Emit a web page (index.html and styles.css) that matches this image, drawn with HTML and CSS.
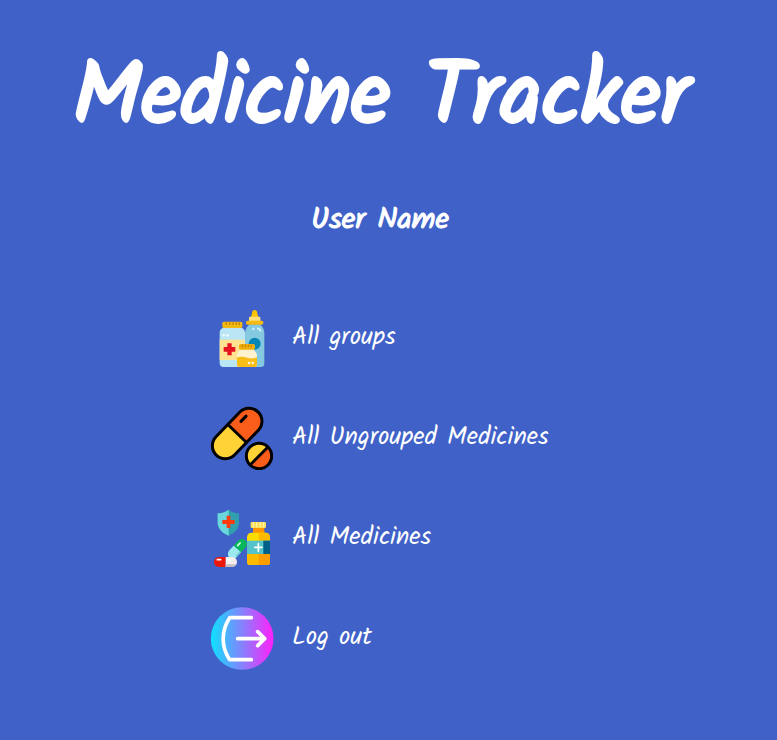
FILE: index.html
```html
<!DOCTYPE html>
<html lang="en">
<head>
<meta charset="utf-8">
<title>Medicine Tracker</title>
<link rel="stylesheet" href="styles.css">
</head>
<body>
<header class="header">
  <h1 class="title">Medicine Tracker</h1>
  <h2 class="user">User Name</h2>
</header>
<nav class="menu">
  <a class="item">
    <svg class="icon" viewBox="24 18 192 192">
      <rect x="73" y="77" width="38" height="14" fill="#8fcbe6"/>
      <path d="M68 83h46c9 0 15 6 15 16v91c0 7-4 11-11 11H64c-7 0-11-4-11-11V99c0-10 6-16 15-16z" fill="#b9e5f5"/>
      <path d="M53 119h76v61H53z" fill="#ffe391"/>
      <rect x="61" y="65" width="60" height="19" rx="5" fill="#f5b914"/>
      <path d="M73 67v8M83 67v8M93 67v8M103 67v8M112 67v8" stroke="#c78500" stroke-width="4"/>
      <path d="M76 130h13v11h11v14H89v11H76v-11H65v-14h11z" fill="#e61420"/>
      <circle cx="65" cy="106" r="4" fill="#eefbff"/><circle cx="77" cy="106" r="4" fill="#eefbff"/>
      <path d="M145 73h27c10 5 15 16 15 27v91c0 6-5 10-10 10h-38c-6 0-10-4-10-10v-91c0-11 6-22 16-27z" fill="#85c9e1"/>
      <path d="M146 53q3-6 4-13c0-13 16-13 16 0q1 7 4 13z" fill="#ffc400"/>
      <rect x="141" y="50" width="34" height="17" rx="3" fill="#ffe07b"/>
      <rect x="132" y="62" width="52" height="12" rx="5" fill="#f5b914"/>
      <circle cx="158" cy="131" r="18" fill="#0787b6"/>
      <circle cx="154" cy="87" r="4" fill="#c8f0ff"/><path d="M165 85c7 0 10 4 11 10" fill="none" stroke="#d7f5ff" stroke-width="5"/>
      <path d="M115 147h40c2 7 10 10 10 20v27c0 4-3 7-8 7h-44c-5 0-8-3-8-7v-27c0-10 8-13 10-20z" fill="#fff2cf"/>
      <path d="M105 172q15-4 30 1t30-1v22c0 4-3 7-8 7h-44c-5 0-8-3-8-7z" fill="#f8bd17"/>
      <rect x="111" y="132" width="48" height="17" rx="5" fill="#f1af0b"/>
      <path d="M121 134v8M130 134v8M139 134v8M148 134v8" stroke="#bd7d00" stroke-width="3"/>
      <circle cx="141" cy="189" r="4" fill="#fff8db"/><circle cx="152" cy="189" r="4" fill="#fff8db"/>
    </svg>
    <span>All groups</span>
  </a>
  <a class="item">
    <svg class="icon" viewBox="24 18 192 192">
      <g transform="translate(105.500 100.500) rotate(-46)" stroke="#000" stroke-width="9">
        <path d="M0-39h-51a39 39 0 0 0 0 78H0z" fill="#ffd336" stroke="none"/>
        <path d="M0-39h51a39 39 0 0 1 0 78H0z" fill="#fa5d1a" stroke="none"/>
        <rect x="-90" y="-39" width="180" height="78" rx="39" fill="none"/>
        <path d="M0-39v78"/><path d="M34-17h22" stroke-linecap="round"/>
      </g>
      <g transform="translate(171 168) rotate(-45)">
        <circle r="38" fill="#ffd336"/><path d="M-38 0a38 38 0 0 0 76 0z" fill="#fa5d1a"/>
        <circle r="38" fill="none" stroke="#000" stroke-width="9"/><path d="M-38 0h76" stroke="#000" stroke-width="9"/>
      </g>
    </svg>
    <span>All Ungrouped Medicines</span>
  </a>
  <a class="item">
    <svg class="icon" viewBox="24 18 192 192">
      <path d="M80 29c-11 8-21 11-33 11v26c0 20 13 33 33 41 20-8 31-21 31-41V40c-12 0-21-3-31-11z" fill="#309fae"/>
      <path d="M80 29c-11 8-21 11-33 11v26c0 20 13 33 33 41z" fill="#6bd7dd"/>
      <path d="M74 47h11v13h13v12H85v12H74V72H61V60h13z" fill="#ff3b0b"/>
      <g transform="translate(106 147) rotate(-48)">
        <path d="M0-15h20a15 15 0 0 1 0 30H0z" fill="#08b65b"/>
        <path d="M0-15h-20a15 15 0 0 0 0 30H0z" fill="#9ceaf0"/>
        <path d="M8-6h11" stroke="#c9ffe0" stroke-width="5" stroke-linecap="round"/>
        <path d="M-19 12H0" stroke="#68c5d1" stroke-width="4"/>
      </g>
      <path d="M71 171H51a15 15 0 0 0 0 30h20z" fill="#ed1709"/>
      <path d="M71 171h19a15 15 0 0 1 0 30H71z" fill="#f4eeee"/>
      <path d="M71 193h31q-4 8-12 8H71z" fill="#c9bdc4"/>
      <path d="M46 179h10M76 179h9" stroke="#fff" stroke-width="5" stroke-linecap="round"/>
      <rect x="153" y="79" width="34" height="28" fill="#ff9500"/>
      <path d="M149 98h41c9 0 14 6 14 14v74c0 6-4 9-9 9h-51c-5 0-9-3-9-9v-74c0-8 5-14 14-14z" fill="#ffdc00"/>
      <path d="M170 98h20c9 0 14 6 14 14v10h-34zM135 162h69v24c0 6-4 9-9 9h-51c-5 0-9-3-9-9z" fill="#ffba00"/>
      <path d="M170 162h34v24c0 6-4 9-9 9h-25z" fill="#ff9d00"/>
      <rect x="135" y="122" width="69" height="40" fill="#54c4ca"/><rect x="184" y="122" width="20" height="40" fill="#005f87"/>
      <path d="M169 131v23M158 142h22" stroke="#fff" stroke-width="5" stroke-linecap="round"/>
      <rect x="146" y="66" width="46" height="18" rx="4" fill="#ffdf55"/>
      <path d="M154 67v15M164 67v15M175 67v15M185 67v15" stroke="#fff2a6" stroke-width="4"/>
    </svg>
    <span>All Medicines</span>
  </a>
  <a class="item">
    <svg class="icon" viewBox="24 18 192 192">
      <defs><linearGradient id="glow"><stop stop-color="#0ce2ff"/><stop offset="1" stop-color="#ff21fa"/></linearGradient></defs>
      <circle cx="120.500" cy="115.500" r="94" fill="url(#glow)"/>
      <g fill="none" stroke="#fff" stroke-width="11" stroke-linecap="round" stroke-linejoin="round">
        <path d="M148 53H83C57 92 57 140 83 179h65"/><path d="M107 116h80M167 95l21 21-21 21"/>
      </g>
    </svg>
    <span>Log out</span>
  </a>
</nav>
</body>
</html>
```
FILE: styles.css
```css
* { box-sizing: border-box; }
body {
  margin: 0;
  height: 740px;
  overflow: hidden;
  background: #4062c8;
  color: #fff;
  font-family: Kalam, Lato, "Liberation Sans", sans-serif;
}
h1, h2 { margin: 0; text-align: center; white-space: nowrap; font-weight: 400; }
.header { height: 288px; padding-top: 25px; }
.title { height: 167px; padding-right: 15px; font-size: 87.2px; line-height: 150px; -webkit-text-stroke: 3.8px #fff; }
.user { height: 50px; padding-right: 17px; font-size: 30px; line-height: 56px; -webkit-text-stroke: 1.1px #fff; }
.menu { padding-left: 210px; }
.item { display: flex; align-items: center; gap: 18px; height: 100px; font-size: 25px; line-height: 40px; }
.item span { padding-bottom: 2px; }
.icon { flex: none; width: 64px; height: 64px; }
```
